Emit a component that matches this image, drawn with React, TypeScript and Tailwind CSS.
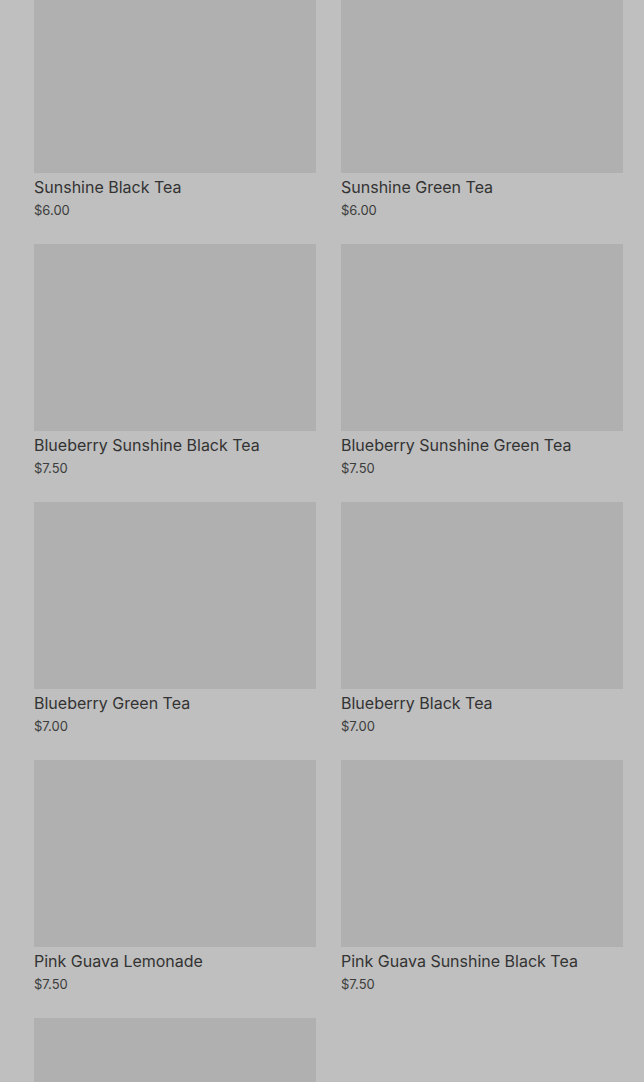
import React from 'react';

interface Product {
  name?: string;
  price?: string;
}

// last card sits below the fold, only its image shows
const PRODUCTS: Product[] = [
  { name: 'Sunshine Black Tea', price: '$6.00' },
  { name: 'Sunshine Green Tea', price: '$6.00' },
  { name: 'Blueberry Sunshine Black Tea', price: '$7.50' },
  { name: 'Blueberry Sunshine Green Tea', price: '$7.50' },
  { name: 'Blueberry Green Tea', price: '$7.00' },
  { name: 'Blueberry Black Tea', price: '$7.00' },
  { name: 'Pink Guava Lemonade', price: '$7.50' },
  { name: 'Pink Guava Sunshine Black Tea', price: '$7.50' },
  {},
];

const ProductCard: React.FC<{ item: Product }> = ({ item }) => (
  <div className="flex flex-col">
    <div className="h-[187px] w-full bg-[#b0b0b0]" />
    {item.name && (
      <>
        <div className="mt-[3px] text-[16px] leading-[22px] text-[#333333]">{item.name}</div>
        <div className="mt-[2px] text-[13px] leading-[20px] text-[#3c3c3c]">{item.price}</div>
      </>
    )}
  </div>
);

export default function App() {
  return (
    <div className="h-[1082px] overflow-hidden bg-[#bfbfbf] font-['Inter','Noto_Sans',sans-serif]">
      <div className="mt-[-14px] grid grid-cols-2 gap-x-[25px] gap-y-[24px] pl-[34px] pr-[21px]">
        {PRODUCTS.map((item, idx) => (
          <ProductCard key={idx} item={item} />
        ))}
      </div>
    </div>
  );
}
